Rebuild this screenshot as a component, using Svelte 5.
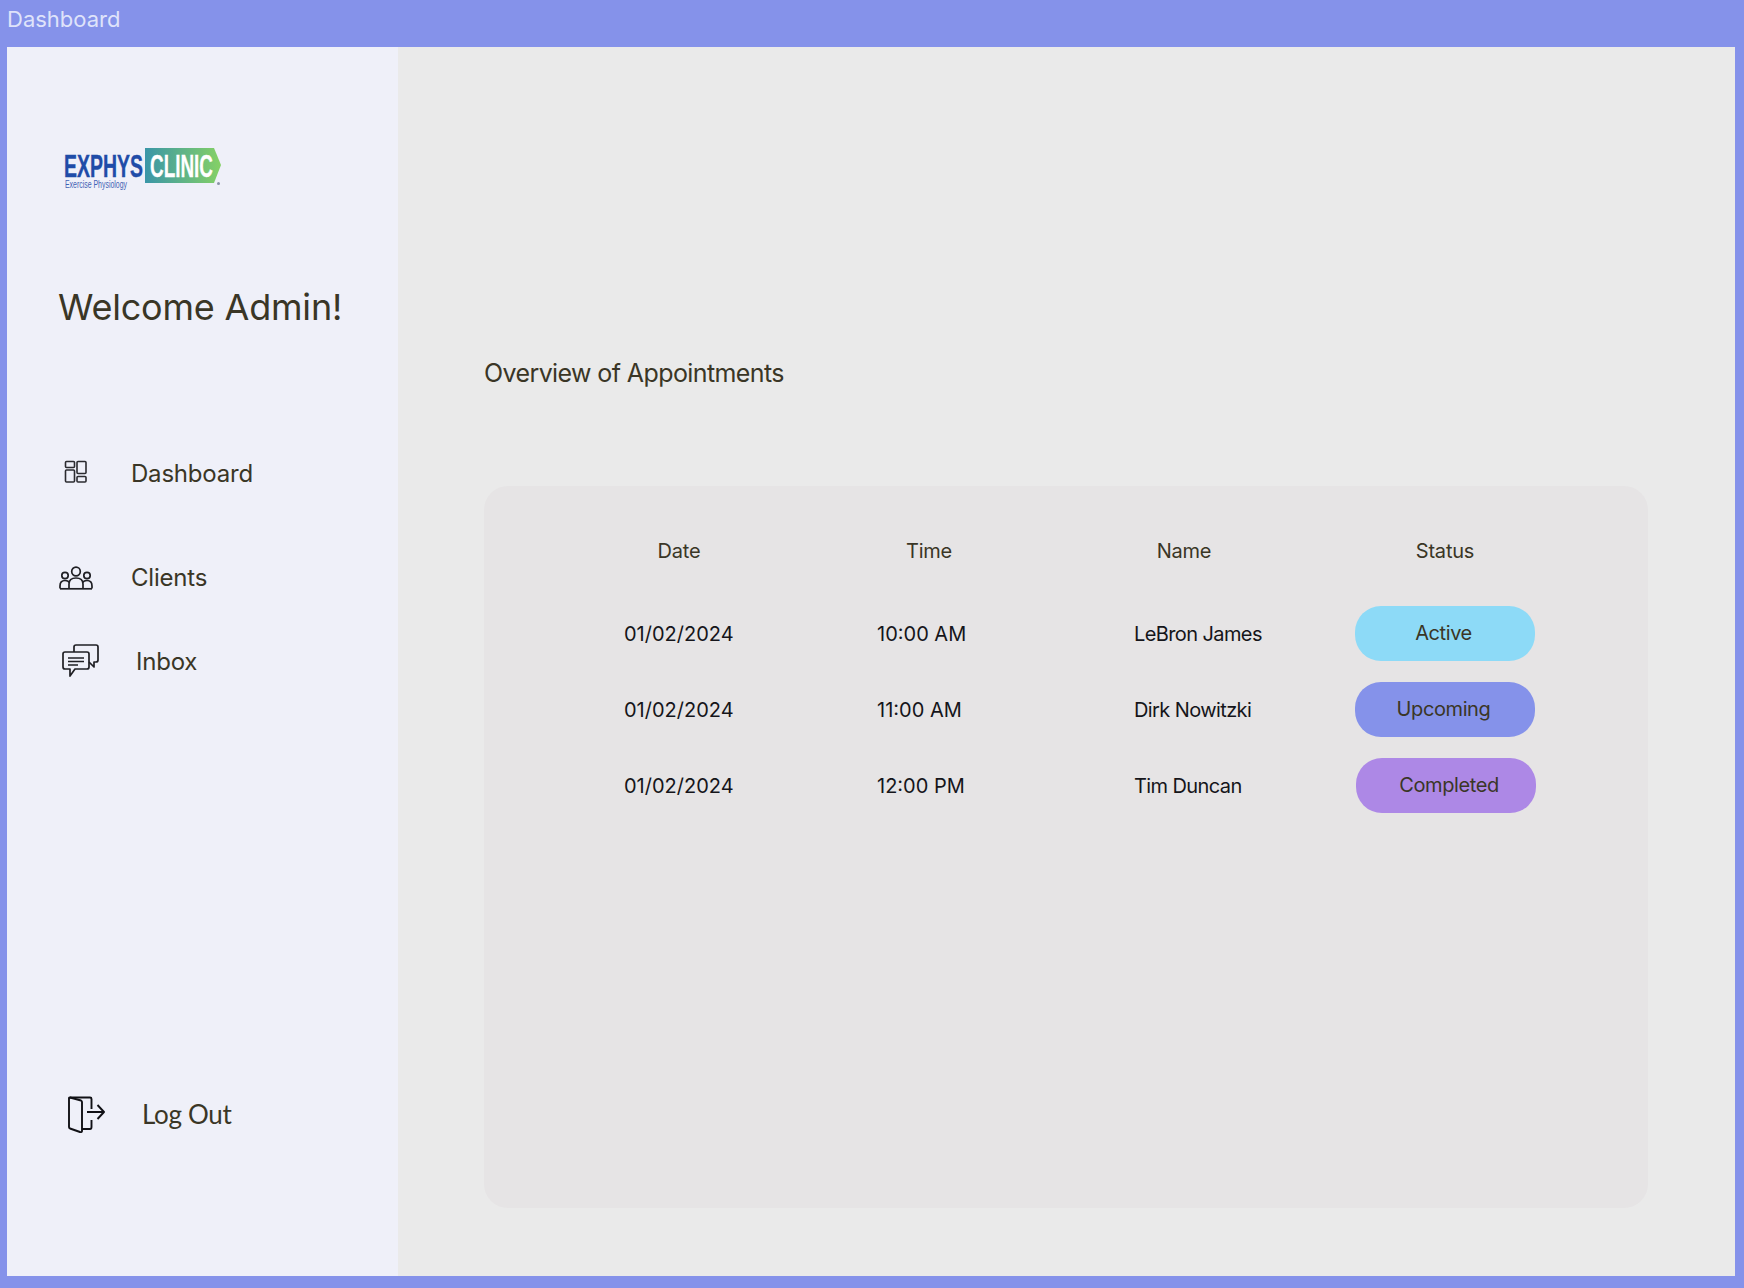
<script>
    const columns = ["Date", "Time", "Name", "Status"];
    const rows = [
        { date: "01/02/2024", time: "10:00 AM", name: "LeBron James", status: "Active", kind: "active" },
        { date: "01/02/2024", time: "11:00 AM", name: "Dirk Nowitzki", status: "Upcoming", kind: "upcoming" },
        { date: "01/02/2024", time: "12:00 PM", name: "Tim Duncan", status: "Completed", kind: "completed" }
    ];
</script>

<div class="frame">
    <div class="titlebar">Dashboard</div>
    <div class="window">
        <aside class="sidebar">
            <svg class="logo" width="170" height="48" viewBox="0 0 170 48">
                <defs>
                    <linearGradient id="clinic-grad" x1="0" x2="1" y1="0" y2="0">
                        <stop offset="0" stop-color="#3a96a8" />
                        <stop offset="1" stop-color="#85d165" />
                    </linearGradient>
                </defs>
                <path d="M81 3H150L157 20L150 38H81Z" fill="url(#clinic-grad)" />
                <text x="0" y="32" textLength="79" lengthAdjust="spacingAndGlyphs" class="logo-a">EXPHYS</text>
                <text x="86" y="32" textLength="63" lengthAdjust="spacingAndGlyphs" class="logo-b">CLINIC</text>
                <text x="1" y="43" textLength="62" lengthAdjust="spacingAndGlyphs" class="logo-c">Exercise Physiology</text>
                <circle cx="154.500" cy="38.500" r="1.500" fill="#8a93a8" />
            </svg>

            <h1>Welcome Admin!</h1>

            <nav>
                <div class="nav-item dashboard">
                    <span class="icon">
                        <svg width="24" height="24" viewBox="0 0 24 24" fill="none" stroke="#2b2b30" stroke-width="1.600">
                            <rect x="1.500" y="1.500" width="9" height="6" rx="1" />
                            <rect x="1.500" y="10" width="9" height="12" rx="1" />
                            <rect x="13" y="1.500" width="9" height="12" rx="1" />
                            <rect x="13" y="16.500" width="9" height="5.500" rx="1" />
                        </svg>
                    </span>
                    <span>Dashboard</span>
                </div>
                <div class="nav-item clients">
                    <span class="icon">
                        <svg width="34" height="24" viewBox="0 0 34 24" fill="none" stroke="#1f1f24" stroke-width="1.700">
                            <circle cx="17" cy="5.500" r="4.300" />
                            <circle cx="6" cy="9.500" r="3.200" />
                            <circle cx="28" cy="9.500" r="3.200" />
                            <path d="M1 22.500V20Q1 14.500 6 14.500Q9 14.500 10.500 16.500" />
                            <path d="M33 22.500V20Q33 14.500 28 14.500Q25 14.500 23.500 16.500" />
                            <path d="M10 22.500V18Q10 12 17 12Q24 12 24 18V22.500" />
                            <path d="M1 22.800H33" />
                        </svg>
                    </span>
                    <span>Clients</span>
                </div>
                <div class="nav-item inbox">
                    <span class="icon">
                        <svg width="38" height="34" viewBox="0 0 38 34" fill="none" stroke="#1f1f24" stroke-width="1.700" stroke-linejoin="round">
                            <path d="M13 8V3Q13 1 15 1H35Q37 1 37 3V16Q37 18 35 18H33V23L28 18" />
                            <path d="M4 8H26Q28 8 28 10V23Q28 25 26 25H14L9 32V25H4Q2 25 2 23V10Q2 8 4 8Z" />
                            <path d="M7 14H23M7 17.500H23M7 21H17" />
                        </svg>
                    </span>
                    <span>Inbox</span>
                </div>
            </nav>

            <div class="nav-item logout">
                <span class="icon">
                    <svg width="38" height="38" viewBox="0 0 38 38" fill="none" stroke="#111116" stroke-width="1.900" stroke-linejoin="round">
                        <path d="M2 2V31Q2 32 3 32.500L13 36Q15 36.500 15 35V6Q15 5 14 4.500L3 1.500Q2 1.300 2 2Z" />
                        <path d="M3 1.500H23Q24.500 1.500 24.500 3V13M24.500 24V31Q24.500 33 23 33H15" />
                        <path d="M20 16H37M30.500 9L37 16L30.500 23" />
                    </svg>
                </span>
                <span>Log Out</span>
            </div>
        </aside>

        <main>
            <h2>Overview of Appointments</h2>
            <section class="card">
                <div class="head">
                    {#each columns as column}
                        <span>{column}</span>
                    {/each}
                </div>
                {#each rows as row}
                    <div class="row {row.kind}">
                        <span>{row.date}</span>
                        <span>{row.time}</span>
                        <span class="name">{row.name}</span>
                        <span class="pill {row.kind}">{row.status}</span>
                    </div>
                {/each}
            </section>
        </main>
    </div>
</div>

<style>
    :global(body) {
        margin: 0;
    }

    .frame {
        width: 1744px;
        height: 1288px;
        box-sizing: border-box;
        padding: 0 9px 12px 7px;
        background: #8592ea;
        display: flex;
        flex-direction: column;
        font-family: Inter, "Liberation Sans", sans-serif;
        color: #3a3626;
    }

    .titlebar {
        height: 47px;
        flex: none;
        font-size: 22px;
        line-height: 38px;
        color: #dfe3fa;
    }

    .window {
        flex: 1;
        display: flex;
        min-height: 0;
    }

    .sidebar {
        width: 391px;
        flex: none;
        box-sizing: border-box;
        background: #eff0f9;
        display: flex;
        flex-direction: column;
        padding-top: 98px;
    }

    .logo {
        display: block;
        margin-left: 57px;
    }

    .logo-a {
        font: 700 32px "Liberation Sans", sans-serif;
        fill: #1f4ca8;
        stroke: #1f4ca8;
        stroke-width: 0.4px;
    }

    .logo-b {
        font: 700 32px "Liberation Sans", sans-serif;
        fill: #fff;
        stroke: #fff;
        stroke-width: 0.3px;
    }

    .logo-c {
        font: 400 10px "Liberation Sans", sans-serif;
        fill: #3f62b4;
    }

    h1 {
        margin: 92px 0 0 51px;
        font-size: 36px;
        line-height: 44px;
        font-weight: 400;
        letter-spacing: -0.2px;
        white-space: nowrap;
    }

    nav {
        margin-top: 125px;
        display: flex;
        flex-direction: column;
    }

    .nav-item {
        display: flex;
        align-items: center;
        font-size: 24px;
        line-height: 40px;
        letter-spacing: -0.2px;
    }

    .icon {
        display: flex;
        align-items: center;
    }

    .icon svg {
        display: block;
    }

    .dashboard {
        padding-left: 57px;
    }

    .dashboard .icon {
        width: 67px;
        padding-bottom: 4px;
    }

    .clients {
        margin-top: 64px;
        padding-left: 52px;
    }

    .clients .icon {
        width: 72px;
    }

    .inbox {
        margin-top: 44px;
        padding-left: 54px;
    }

    .inbox .icon {
        width: 75px;
        padding-bottom: 2px;
    }

    .logout {
        margin-top: auto;
        margin-bottom: 142px;
        padding-left: 60px;
        font-family: Lato, "Liberation Sans", sans-serif;
        font-size: 26px;
        letter-spacing: -0.3px;
    }

    .logout .icon {
        width: 75px;
        padding-top: 2px;
    }

    main {
        flex: 1;
        min-width: 0;
        background: #eaeaea;
        padding: 311px 87px 0 86px;
    }

    h2 {
        margin: 0;
        font-size: 25px;
        line-height: 30px;
        font-weight: 400;
        letter-spacing: -0.6px;
    }

    .card {
        margin-top: 98px;
        height: 722px;
        box-sizing: border-box;
        background: #e6e4e5;
        border-radius: 24px;
        padding-top: 51px;
        font-size: 20px;
    }

    .head {
        display: grid;
        grid-template-columns: 250px 250px 260px 262px;
        padding-left: 70px;
        line-height: 28px;
        letter-spacing: -0.2px;
        text-align: center;
    }

    .row {
        display: grid;
        grid-template-columns: 253px 257px 221px 180px;
        align-items: center;
        padding-left: 140px;
        margin-top: 21px;
        color: #15151a;
    }

    .head + .row {
        margin-top: 41px;
    }

    .row.completed {
        grid-template-columns: 253px 257px 222px 180px;
    }

    .name {
        letter-spacing: -0.6px;
    }

    .pill {
        height: 55px;
        line-height: 55px;
        border-radius: 26px;
        box-sizing: border-box;
        text-align: center;
        letter-spacing: -0.4px;
        color: #3a3626;
    }

    .pill.active {
        background: #8ddaf7;
        padding-right: 3px;
    }

    .pill.upcoming {
        background: #8592ea;
        padding-right: 3px;
    }

    .pill.completed {
        background: #ad88e6;
        padding-left: 6px;
    }
</style>
